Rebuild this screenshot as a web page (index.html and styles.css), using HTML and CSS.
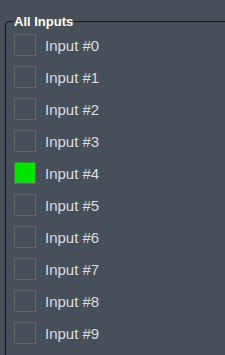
FILE: index.html
```html
<!DOCTYPE html>
<html lang="en">

<head>
    <meta charset="UTF-8">
    <title>All Inputs</title>
    <link rel="stylesheet" href="styles.css">
</head>

<body>
    <fieldset class="inputs">
        <legend>All Inputs</legend>
        <div class="input-row"><span class="box"></span><span class="label">Input #0</span></div>
        <div class="input-row"><span class="box"></span><span class="label">Input #1</span></div>
        <div class="input-row"><span class="box"></span><span class="label">Input #2</span></div>
        <div class="input-row"><span class="box"></span><span class="label">Input #3</span></div>
        <div class="input-row"><span class="box on"></span><span class="label">Input #4</span></div>
        <div class="input-row"><span class="box"></span><span class="label">Input #5</span></div>
        <div class="input-row"><span class="box"></span><span class="label">Input #6</span></div>
        <div class="input-row"><span class="box"></span><span class="label">Input #7</span></div>
        <div class="input-row"><span class="box"></span><span class="label">Input #8</span></div>
        <div class="input-row"><span class="box"></span><span class="label">Input #9</span></div>
    </fieldset>
</body>

</html>
```

FILE: styles.css
```css
* {
    margin: 0;
    padding: 0;
    box-sizing: border-box;
}

body {
    font-family: 'Liberation Sans', Arial, sans-serif;
    background-color: #474f58;
}

/* Panel only shows its top and left edge in the window */
.inputs {
    margin: 14px 0 0 5px;
    border: 1px solid #15191d;
    border-right: none;
    border-bottom: none;
    border-top-left-radius: 4px;
    padding: 0 0 0 8px;
    height: 341px;
}

.inputs legend {
    margin-left: -1px;
    padding: 0 1px;
    color: #ffffff;
    font-size: 13px;
    font-weight: bold;
}

.input-row {
    display: flex;
    align-items: center;
    height: 32px;
}

.box {
    width: 22px;
    height: 22px;
    border: 1px solid #62676a;
}

.box.on {
    background-color: #00e600;
}

.label {
    margin-left: 9px;
    font-size: 15px;
    color: #d6dde3;
}
```
